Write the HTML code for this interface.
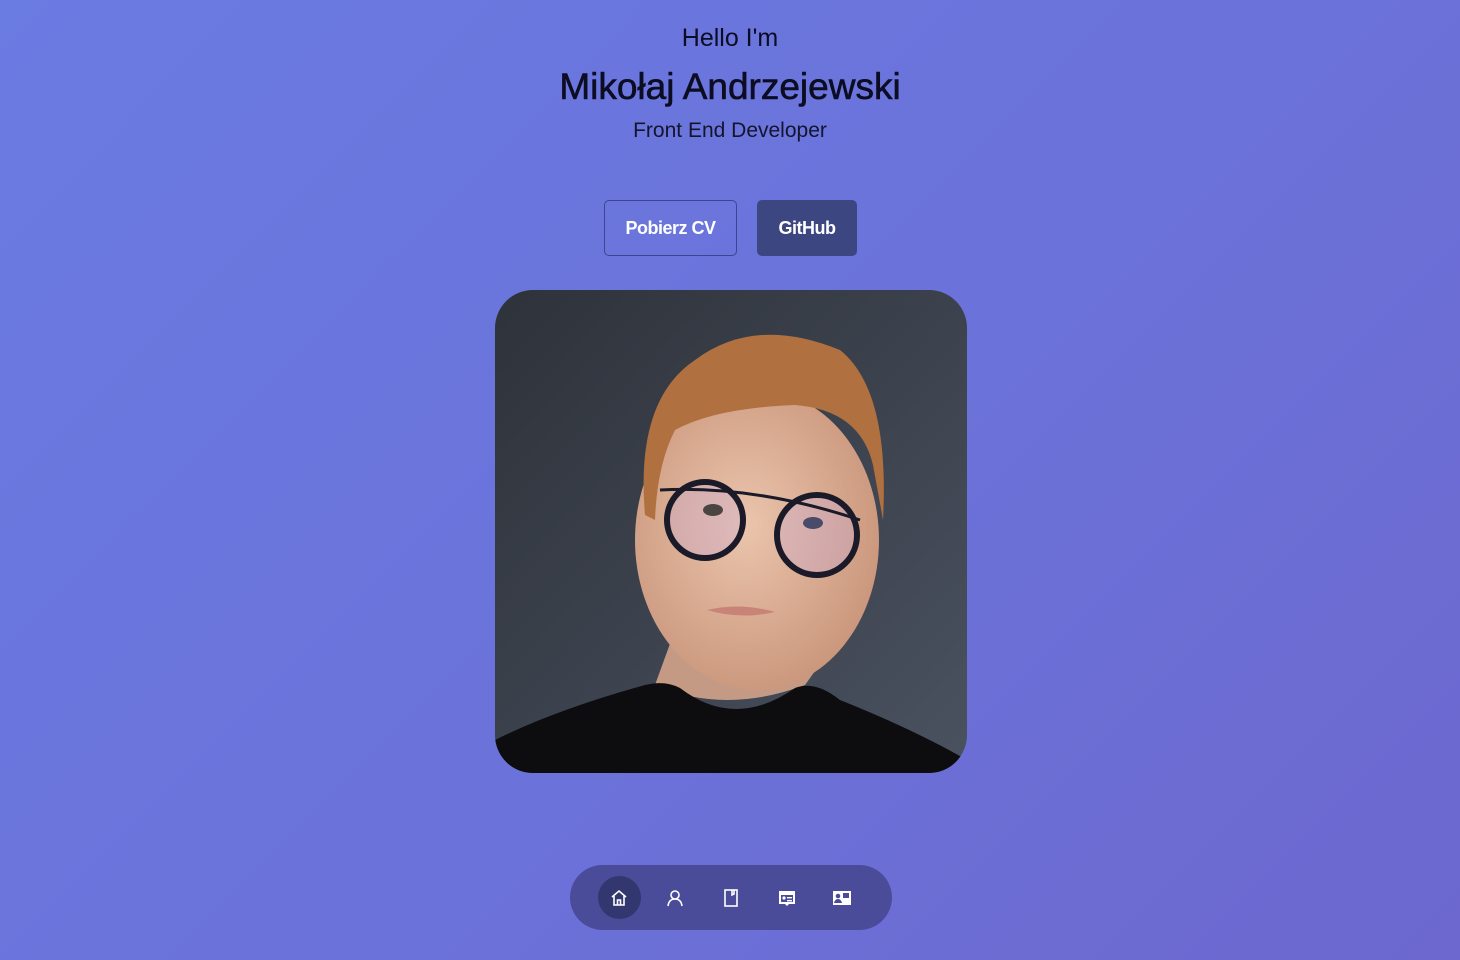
<!DOCTYPE html>
<html><head><meta charset="utf-8"><style>
*{margin:0;padding:0;box-sizing:border-box}
body{width:1460px;height:960px;overflow:hidden;background:linear-gradient(135deg,#6a7be2 0%,#6b72d9 55%,#6c68cf 100%);font-family:"Liberation Sans",sans-serif;position:relative}
.t{position:absolute;left:0;width:1460px;text-align:center;color:#0c0c22}
.b{position:absolute;top:200px;height:56px;border-radius:5px;color:#fff;font-weight:bold;font-size:18px;display:flex;align-items:center;justify-content:center;letter-spacing:-0.5px}
.photo{position:absolute;left:495px;top:290px;width:472px;height:483px;border-radius:38px;overflow:hidden}
.nav{position:absolute;left:570px;top:865px;width:322px;height:65px;border-radius:33px;background:#4a4c9a}
.nav .act{position:absolute;left:28px;top:11px;width:43px;height:43px;border-radius:50%;background:#33376f}
.nav svg{position:absolute;top:24px}
</style></head><body>
<div class="t" style="top:24px;font-size:25px">Hello I'm</div>
<div class="t" style="top:66px;font-size:37px;-webkit-text-stroke:0.6px #0c0c22">Mikołaj Andrzejewski</div>
<div class="t" style="top:119px;font-size:21px;color:#14142e">Front End Developer</div>
<div class="b" style="left:604px;width:133px;border:1px solid #3e4590;background:transparent">Pobierz CV</div>
<div class="b" style="left:757px;width:100px;background:#3c4681">GitHub</div>
<div class="photo">
<svg width="472" height="483" viewBox="0 0 472 483">
<defs><linearGradient id="bg" x1="0" y1="0" x2="1" y2="1"><stop offset="0" stop-color="#2e323a"/><stop offset="1" stop-color="#4a5260"/></linearGradient>
<radialGradient id="sk" cx="0.45" cy="0.45" r="0.6"><stop offset="0" stop-color="#ebc5ad"/><stop offset="1" stop-color="#c9957a"/></radialGradient></defs>
<rect width="472" height="483" fill="url(#bg)"/>
<path d="M160 395 Q230 425 310 395 L335 360 L300 340 L180 340 Z" fill="#c59a84"/>
<path d="M0 450 Q60 420 150 395 Q170 390 185 398 Q240 440 300 398 Q320 390 345 410 Q420 440 472 470 L472 483 L0 483 Z" fill="#0d0d0f"/>
<ellipse cx="262" cy="250" rx="122" ry="150" fill="url(#sk)"/>
<path d="M150 225 Q140 110 200 70 Q260 25 345 60 Q395 100 388 230 L378 175 Q365 120 300 115 Q220 118 180 140 Q162 175 160 230 Z" fill="#b0703f"/>
<circle cx="210" cy="230" r="38" fill="#c9a8d8" fill-opacity=".35" stroke="#1a1a28" stroke-width="6"/>
<circle cx="322" cy="245" r="40" fill="#c9a8d8" fill-opacity=".35" stroke="#1a1a28" stroke-width="6"/>
<path d="M165 200 Q260 195 365 230" stroke="#1a1a28" stroke-width="3" fill="none"/>
<ellipse cx="218" cy="220" rx="10" ry="6" fill="#4a4540"/><ellipse cx="318" cy="233" rx="10" ry="6" fill="#4a4a6a"/>
<path d="M212 320 Q245 312 280 322 Q245 330 212 320" fill="#c98478"/>
</svg></div>
<div class="nav"><div class="act"></div>
<svg style="left:40px" width="18" height="18" viewBox="0 0 18 18" fill="none" stroke="#fff" stroke-width="1.6"><path d="M2 8 L9 2 L16 8 M4 7 V16 H14 V7 M7.5 16 V11 H10.5 V16"/></svg>
<svg style="left:96px" width="18" height="18" viewBox="0 0 18 18" fill="none" stroke="#fff" stroke-width="1.6"><circle cx="9" cy="6" r="4"/><path d="M2 17 Q3 10 9 10 Q15 10 16 17"/></svg>
<svg style="left:152px" width="18" height="18" viewBox="0 0 18 18" fill="none" stroke="#fff" stroke-width="1.6"><rect x="3" y="1" width="12" height="16"/><path d="M10 1 V6 L12 5 V1"/></svg>
<svg style="left:208px" width="18" height="18" viewBox="0 0 18 18" fill="#fff"><path d="M1 2 H17 V15 H11 L9 17 L7 15 H1 Z M3 6 V13 H15 V6 Z"/><circle cx="6" cy="9" r="1.6"/><rect x="9" y="8" width="5" height="1.4"/><rect x="9" y="11" width="5" height="1.4"/></svg>
<svg style="left:262px" width="20" height="18" viewBox="0 0 20 18" fill="#fff"><path d="M1 2 H19 V16 H1 Z M11 4 V9 H17 V4 Z"/><circle cx="6" cy="7" r="2.3" fill="#4a4c9a"/><path d="M2 14 Q3 10 6 10 Q9 10 10 14 Z" fill="#4a4c9a"/></svg>
</div>
</body></html>
